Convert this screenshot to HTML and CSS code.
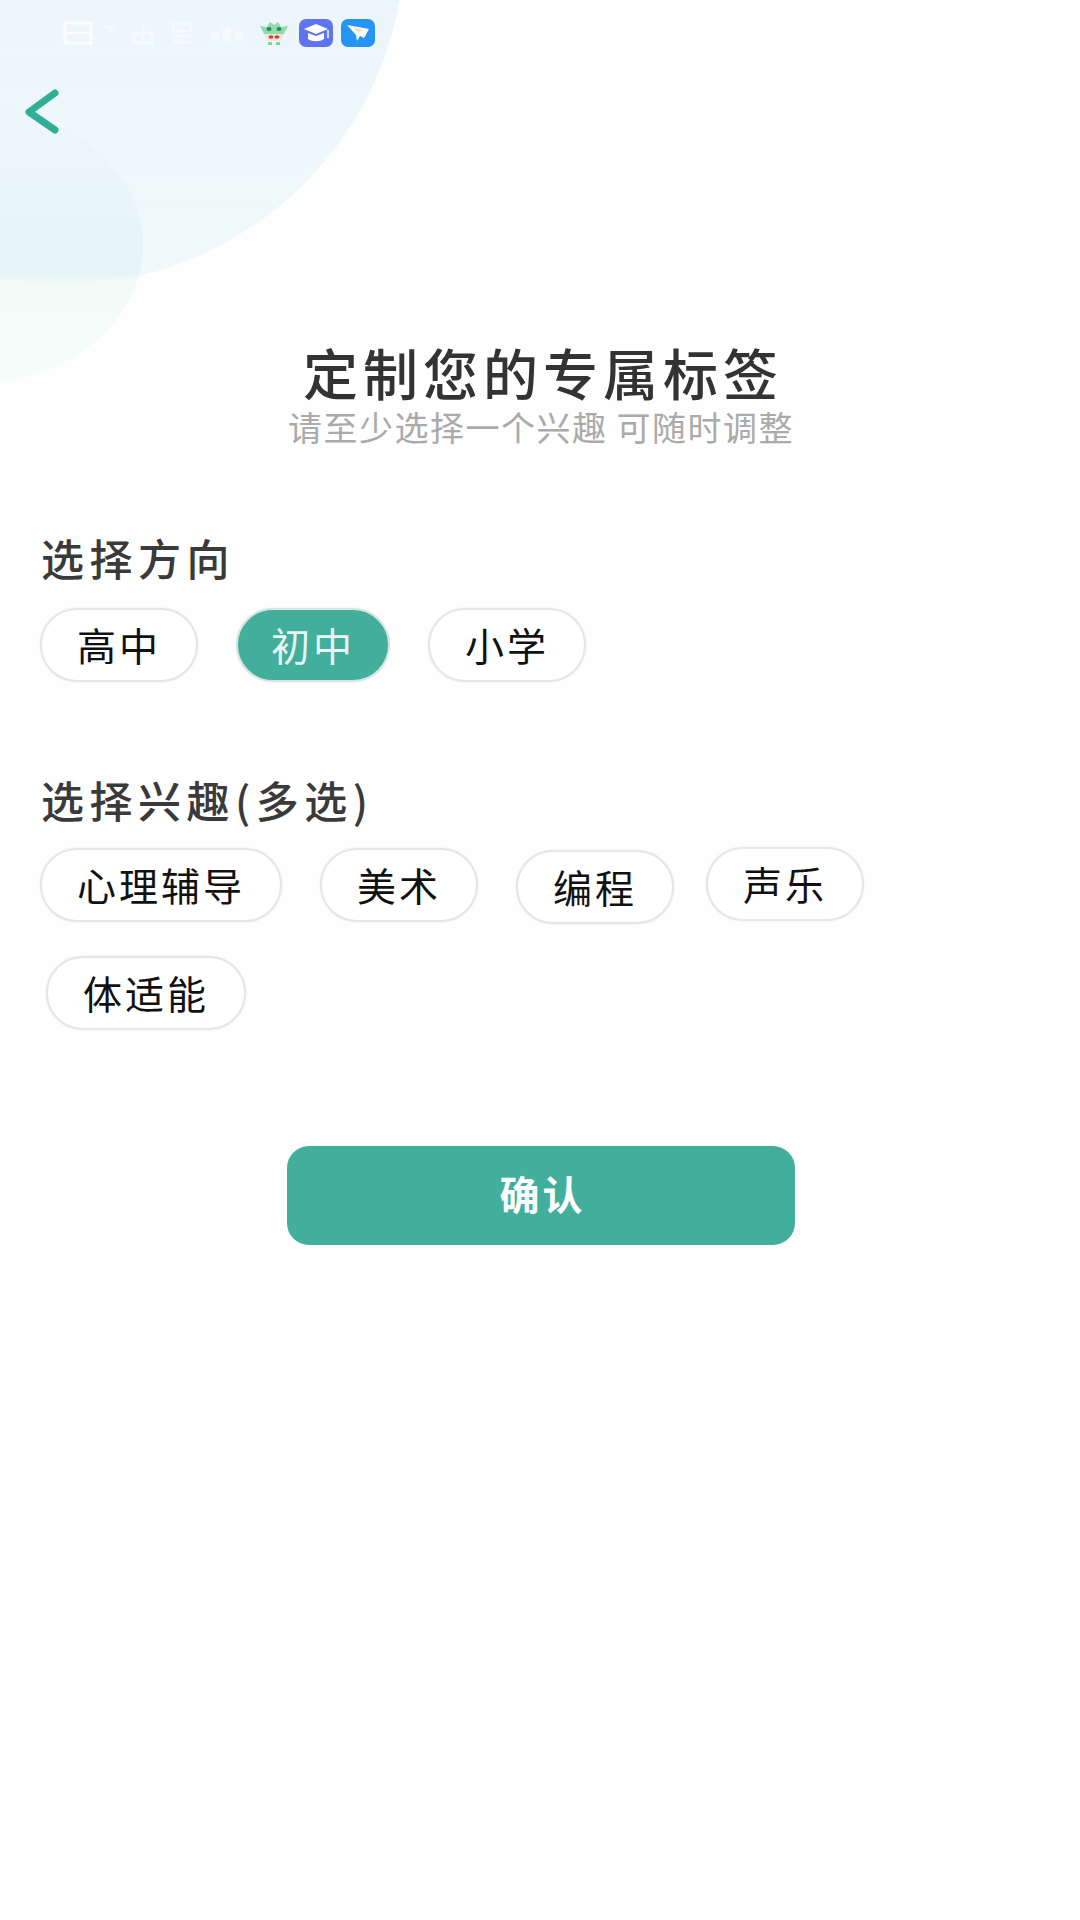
FILE: index.html
```html
<!DOCTYPE html>
<html lang="zh-CN">
<head>
    <meta charset="UTF-8">
    <meta name="viewport" content="width=device-width, initial-scale=1.0">
    <title>定制您的专属标签</title>
    <link rel="stylesheet" href="styles.css">
</head>
<body>
    <div class="page">
        <div class="blob blob-large"></div>
        <div class="blob blob-small"></div>
        <div class="patch"></div>

        <div class="status-bar">
            <svg class="status-sim" width="30" height="24" viewBox="0 0 30 24">
                <rect x="2" y="2" width="26" height="20" fill="none" stroke="#fff" stroke-width="3"/>
                <path d="M2 12h26" stroke="#fff" stroke-width="2"/>
            </svg>
            <svg class="status-faint" width="14" height="24" viewBox="0 0 14 24">
                <path d="M1 6h12M7 6v5" stroke="#fff" stroke-width="3"/>
            </svg>
            <svg class="status-faint" width="24" height="24" viewBox="0 0 24 24">
                <path d="M3 22V12h18v10zM12 4v18" fill="none" stroke="#fff" stroke-width="3"/>
            </svg>
            <svg class="status-faint" width="26" height="24" viewBox="0 0 26 24">
                <path d="M4 3h18v7H4zM4 15h18M4 21h18" fill="none" stroke="#fff" stroke-width="3"/>
            </svg>
            <svg class="status-faint" width="36" height="24" viewBox="0 0 36 24">
                <path d="M2 12h8v8H2zM14 6h8v14h-8zM26 10h8v10h-8z" fill="#fff"/>
            </svg>
            <svg class="status-dragon" width="30" height="26" viewBox="0 0 30 26">
                <path d="M1 6l7 1 3-5 4 3 4-3 3 5 7-1-4 8H5z" fill="#8ddcae"/>
                <ellipse cx="10" cy="9" rx="2.5" ry="2" fill="#2c8a58"/>
                <ellipse cx="20" cy="9" rx="2.5" ry="2" fill="#2c8a58"/>
                <path d="M6 14h18l-2 7H8z" fill="#f7e3da"/>
                <ellipse cx="12" cy="17" rx="2.5" ry="1.8" fill="#c9443c"/>
                <ellipse cx="18" cy="17" rx="2.5" ry="1.8" fill="#c9443c"/>
                <path d="M9 22h4v3H9zM17 22h4v3h-4z" fill="#7ed59f"/>
            </svg>
            <svg class="status-app" width="34" height="28" viewBox="0 0 34 28">
                <rect width="34" height="28" rx="7" fill="#5f74f0"/>
                <path d="M5 10l12-5 12 5-12 5z" fill="#fff"/>
                <path d="M9 14v6c4 3 12 3 16 0v-6l-8 3z" fill="#fff"/>
                <path d="M29 11v8" stroke="#fff" stroke-width="1.5"/>
            </svg>
            <svg class="status-app" width="34" height="28" viewBox="0 0 34 28">
                <rect width="34" height="28" rx="7" fill="#2594f4"/>
                <path d="M6 6l22 4-5 9-4-2-3 5-1-6z" fill="#fff"/>
                <path d="M12 8l10 3-5 2z" fill="#f3d9a8"/>
            </svg>
        </div>

        <a class="back-link" href="#">
            <svg width="40" height="52" viewBox="0 0 40 52">
                <path d="M32 7L6 26l26 18" fill="none" stroke="#30ae96" stroke-width="7" stroke-linecap="round" stroke-linejoin="round"/>
            </svg>
        </a>

        <h1 class="title">定制您的专属标签</h1>
        <p class="subtitle">请至少选择一个兴趣 可随时调整</p>

        <h2 class="section-label">选择方向</h2>
        <div class="chip-row">
            <div class="chip">高中</div>
            <div class="chip chip-active">初中</div>
            <div class="chip">小学</div>
        </div>

        <h2 class="section-label section-label-second">选择兴趣(多选)</h2>
        <div class="chip-row chip-row-tight">
            <div class="chip">心理辅导</div>
            <div class="chip">美术</div>
            <div class="chip chip-down">编程</div>
            <div class="chip chip-up">声乐</div>
        </div>
        <div class="chip-row chip-row-last">
            <div class="chip">体适能</div>
        </div>

        <button class="confirm" type="button">确认</button>
    </div>
</body>
</html>
```

FILE: styles.css
```css
body {
    margin: 0;
    font-family: "Noto Sans CJK SC", "Noto Sans", sans-serif;
    background-color: #fefefe;
}
.page {
    position: relative;
    width: 1080px;
    height: 1920px;
    overflow: hidden;
    background-color: #fefefe;
}
.blob {
    position: absolute;
    border-radius: 50%;
}
.blob-large {
    left: -285px;
    top: -405px;
    width: 690px;
    height: 690px;
    background: linear-gradient(to bottom, #ebf5fc 55%, #f1faf9 100%);
}
.blob-small {
    left: -203px;
    top: 105px;
    width: 346px;
    height: 280px;
    background: linear-gradient(to bottom, rgba(224, 240, 246, 0.1), rgba(216, 236, 242, 0.45) 60%, rgba(240, 250, 247, 0.8) 63%, rgba(245, 252, 249, 0.8));
}
.patch {
    position: absolute;
    left: 540px;
    top: 945px;
    width: 190px;
    height: 85px;
    background-color: #fff;
}
.status-bar {
    position: relative;
    display: flex;
    align-items: center;
    height: 28px;
    padding: 19px 0 0 63px;
}
.status-bar svg {
    flex-shrink: 0;
}
.status-sim {
    margin-right: 10px;
    opacity: 0.85;
}
.status-faint {
    margin-right: 14px;
    opacity: 0.5;
}
.status-dragon {
    margin-left: 0;
    margin-right: 10px;
}
.status-app {
    margin-right: 8px;
}
.back-link {
    position: relative;
    display: block;
    width: 40px;
    height: 52px;
    margin: 39px 0 0 23px;
}
.title {
    position: relative;
    margin: 203px 0 0;
    padding-left: 6px;
    font-size: 55px;
    line-height: 60px;
    font-weight: 500;
    letter-spacing: 5px;
    text-align: center;
    color: #333;
}
.subtitle {
    margin: 6px 0 0;
    padding-left: 2px;
    font-size: 34px;
    line-height: 40px;
    letter-spacing: 1.5px;
    text-align: center;
    color: #aaa;
}
.section-label {
    margin: 85px 0 0 41px;
    font-size: 43px;
    line-height: 50px;
    font-weight: 500;
    letter-spacing: 5.5px;
    color: #3a3a3a;
}
.section-label-second {
    margin-top: 92px;
}
.chip-row {
    display: flex;
    align-items: flex-start;
    gap: 38px;
    margin: 26px 0 0 40px;
}
.chip-row-tight {
    margin-top: 24px;
}
.chip-row-last {
    margin: 32px 0 0 46px;
}
.chip {
    box-sizing: border-box;
    height: 74px;
    padding: 0 35px;
    font-size: 39px;
    line-height: 68px;
    letter-spacing: 3px;
    color: #111;
    background-color: #fff;
    border: 2px solid #e6e6e6;
    border-radius: 37px;
    box-shadow: 0 0 2px rgba(0, 0, 0, 0.1);
}
.chip-active {
    padding: 0 33px;
    color: #e8f6f3;
    background-color: #42ae9c;
    border-color: #d6e4e2;
}
.chip-down {
    margin-top: 2px;
}
.chip-up {
    margin: -1px 0 0 -6px;
}
.confirm {
    display: block;
    width: 508px;
    height: 99px;
    margin: 116px 0 0 287px;
    padding: 0 0 6px 3px;
    font-family: inherit;
    font-size: 40px;
    font-weight: 700;
    letter-spacing: 3px;
    color: #fff;
    background-color: #42ae9c;
    border: none;
    border-radius: 22px;
}
```
